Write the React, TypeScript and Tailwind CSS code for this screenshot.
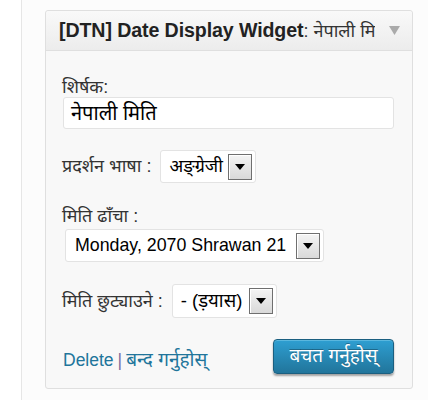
import React from 'react';

const font = { fontFamily: '"Liberation Sans", "Noto Sans", "Noto Sans Devanagari", Arial, sans-serif' };

const DropButton: React.FC = () => (
  <span className="flex h-[26px] w-[24px] shrink-0 items-center justify-center border border-[#6f6f6f] bg-gradient-to-b from-[#f4f4f4] to-[#d9d9d9] shadow-[inset_1px_1px_0_#fff]">
    <svg width="10" height="6" viewBox="0 0 10 6">
      <path d="M0 0 L10 0 L5 6 Z" fill="#000" />
    </svg>
  </span>
);

const Select: React.FC<{ value: string; className: string }> = ({ value, className }) => (
  <div
    className={`flex items-center justify-between rounded-[3px] border border-[#e3e3e3] bg-white pl-[8px] pr-[3px] text-black ${className}`}
  >
    <span className="whitespace-nowrap">{value}</span>
    <DropButton />
  </div>
);

const App: React.FC = () => {
  return (
    <div className="flex h-[400px] w-[428px] bg-white" style={font}>
      <div className="w-[21px] shrink-0 bg-white" />
      <div className="flex-1 border-l border-[#e6e6e6] bg-[#fcfcfc] pl-[23px] pt-[10px]">
        <div className="w-[368px] rounded-[3px] border border-[#dfdfdf] bg-[#f8f8f8]">
          <div className="flex h-[40px] items-center justify-between rounded-t-[3px] border-b border-[#dfdfdf] bg-gradient-to-b from-[#f9f9f9] to-[#ececec] pl-[13px] pr-[12px]">
            <div className="w-[316px] overflow-hidden whitespace-nowrap text-[#222]">
              <span className="text-[19.6px] font-bold tracking-[-0.1px]">[DTN] Date Display Widget</span>
              <span className="text-[18px] text-[#333]">: नेपाली मिति</span>
            </div>
            <svg width="11" height="9" viewBox="0 0 11 9">
              <path d="M0 0 L11 0 L5.5 9 Z" fill="#aaa" />
            </svg>
          </div>

          <div className="px-[16px] pb-[13px] pt-[26px] text-[18px] text-[#333]">
            <div className="h-[20px] leading-[20px]">शिर्षक:</div>
            <div className="ml-px flex h-[32px] w-[331px] items-center rounded-[3px] border border-[#e3e3e3] bg-white px-[7px] text-[20px] text-black">
              नेपाली मिति
            </div>

            <div className="mt-[21px] flex items-center gap-[9px]">
              <span>प्रदर्शन भाषा :</span>
              <Select value="अङ्ग्रेजी" className="h-[33px] w-[96px] text-[18px]" />
            </div>

            <div className="mt-[23px] h-[20px] leading-[20px]">मिति ढाँचा :</div>
            <Select
              value="Monday, 2070 Shrawan 21"
              className="ml-[3px] mt-[3px] h-[33px] w-[259px] pl-[9px] text-[17.8px]"
            />

            <div className="mt-[22px] flex items-center gap-[9px]">
              <span>मिति छुट्याउने :</span>
              <Select value="- (ड़यास)" className="h-[34px] w-[105px] text-[18.5px]" />
            </div>

            <div className="mt-[20px] flex items-center justify-between">
              <div className="ml-px mt-[8px] flex items-center text-[#21759b]">
                <a href="#" className="text-[17.5px] text-[#21759b]">Delete</a>
                <span className="mx-[4px] text-[17.5px] text-[#7a6fa0]">|</span>
                <a href="#" className="text-[19px] text-[#21759b]">बन्द गर्नुहोस्</a>
              </div>
              <button
                type="button"
                className="-ml-[2px] mr-[2px] h-[35px] w-[121px] rounded-[4px] border border-[#1b5f80] bg-gradient-to-b from-[#2e9fd2] to-[#21759b] text-[19px] text-white shadow-[0_2px_2px_rgba(0,0,0,0.35),inset_0_1px_0_rgba(120,200,230,0.6)] [text-shadow:0_-1px_0_rgba(0,0,0,0.3)]"
              >
                बचत गर्नुहोस्
              </button>
            </div>
          </div>
        </div>
      </div>
    </div>
  );
};

export default App;
